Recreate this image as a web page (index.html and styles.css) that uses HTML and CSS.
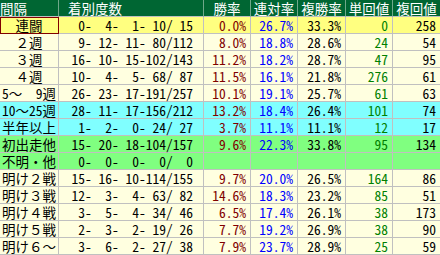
FILE: index.html
```html
<!DOCTYPE html>
<html lang="ja">
<head>
<meta charset="utf-8">
<link rel="stylesheet" href="styles.css">
</head>
<body>
<table class="stats">
  <colgroup>
    <col class="c-label"><col class="c-count"><col class="c-w"><col class="c-w"><col class="c-w2"><col class="c-w"><col class="c-w">
  </colgroup>
  <thead>
    <tr>
      <th class="h-label">間隔</th>
      <th class="h-count">着別度数</th>
      <th>勝率</th>
      <th>連対率</th>
      <th>複勝率</th>
      <th>単回値</th>
      <th>複回値</th>
    </tr>
  </thead>
  <tbody>
    <tr class="row-hl">
      <td class="label label-hl">連闘</td><td class="count">  0-  4-  1- 10/ 15</td><td class="win">0.0%</td><td class="ren">26.7%</td><td class="fuku">33.3%</td><td class="tan">0</td><td class="fk">258</td>
    </tr>
    <tr>
      <td class="label">２週</td><td class="count">  9- 12- 11- 80/112</td><td class="win">8.0%</td><td class="ren">18.8%</td><td class="fuku">28.6%</td><td class="tan">24</td><td class="fk">54</td>
    </tr>
    <tr>
      <td class="label">３週</td><td class="count"> 16- 10- 15-102/143</td><td class="win">11.2%</td><td class="ren">18.2%</td><td class="fuku">28.7%</td><td class="tan">47</td><td class="fk">95</td>
    </tr>
    <tr>
      <td class="label">４週</td><td class="count"> 10-  4-  5- 68/ 87</td><td class="win">11.5%</td><td class="ren">16.1%</td><td class="fuku">21.8%</td><td class="tan">276</td><td class="fk">61</td>
    </tr>
    <tr>
      <td class="label"><span class="hw">5</span>～　<span class="hw">9</span>週</td><td class="count"> 26- 23- 17-191/257</td><td class="win">10.1%</td><td class="ren">19.1%</td><td class="fuku">25.7%</td><td class="tan">61</td><td class="fk">63</td>
    </tr>
    <tr class="row-cyan">
      <td class="label"><span class="hw">10</span>～<span class="hw">25</span>週</td><td class="count"> 28- 11- 17-156/212</td><td class="win">13.2%</td><td class="ren">18.4%</td><td class="fuku">26.4%</td><td class="tan">101</td><td class="fk">74</td>
    </tr>
    <tr class="row-cyan">
      <td class="label">半年以上</td><td class="count">  1-  2-  0- 24/ 27</td><td class="win">3.7%</td><td class="ren">11.1%</td><td class="fuku">11.1%</td><td class="tan">12</td><td class="fk">17</td>
    </tr>
    <tr class="row-green">
      <td class="label">初出走他</td><td class="count"> 15- 20- 18-104/157</td><td class="win">9.6%</td><td class="ren">22.3%</td><td class="fuku">33.8%</td><td class="tan">95</td><td class="fk">134</td>
    </tr>
    <tr class="row-green">
      <td class="label">不明・他</td><td class="count">  0-  0-  0-  0/  0</td><td class="win"></td><td class="ren"></td><td class="fuku"></td><td class="tan"></td><td class="fk"></td>
    </tr>
    <tr>
      <td class="label">明け２戦</td><td class="count"> 15- 16- 10-114/155</td><td class="win">9.7%</td><td class="ren">20.0%</td><td class="fuku">26.5%</td><td class="tan">164</td><td class="fk">86</td>
    </tr>
    <tr>
      <td class="label">明け３戦</td><td class="count"> 12-  3-  4- 63/ 82</td><td class="win">14.6%</td><td class="ren">18.3%</td><td class="fuku">23.2%</td><td class="tan">85</td><td class="fk">51</td>
    </tr>
    <tr>
      <td class="label">明け４戦</td><td class="count">  3-  5-  4- 34/ 46</td><td class="win">6.5%</td><td class="ren">17.4%</td><td class="fuku">26.1%</td><td class="tan">38</td><td class="fk">173</td>
    </tr>
    <tr>
      <td class="label">明け５戦</td><td class="count">  2-  3-  2- 19/ 26</td><td class="win">7.7%</td><td class="ren">19.2%</td><td class="fuku">26.9%</td><td class="tan">38</td><td class="fk">90</td>
    </tr>
    <tr>
      <td class="label">明け６～</td><td class="count">  3-  6-  2- 27/ 38</td><td class="win">7.9%</td><td class="ren">23.7%</td><td class="fuku">28.9%</td><td class="tan">25</td><td class="fk">59</td>
    </tr>
  </tbody>
</table>
</body>
</html>
```

FILE: styles.css
```css
html, body {
  margin: 0;
  padding: 0;
  background: #ffffff;
}

.stats {
  border-collapse: separate;
  border-spacing: 0;
  table-layout: fixed;
  width: 440px;
  font-family: "Noto Sans CJK JP", "DejaVu Sans", sans-serif;
  font-size: 13.5px;
  color: #000000;
}

.c-label { width: 59px; }
.c-count { width: 145px; }
.c-w { width: 47px; }
.c-w2 { width: 48px; }

.stats th,
.stats td {
  height: 16px;
  padding: 0;
  line-height: 16px;
  border-right: 1px solid #c0c0c0;
  border-bottom: 1px solid #c0c0c0;
  white-space: pre;
  box-sizing: content-box;
}

.stats th:last-child,
.stats td:last-child {
  border-right: none;
}

.stats th {
  background: #006633;
  color: #ffffff;
  font-weight: normal;
  text-align: center;
  border-right-color: #6fa88a;
  border-bottom-color: #c0c0c0;
}

.stats th.h-label {
  text-align: left;
}

.stats th.h-count {
  text-align: left;
  padding-left: 9px;
}

.stats td {
  background: #ffffe0;
  text-align: right;
  padding-right: 4px;
  font-feature-settings: "hwid" 1;
}

.stats td.label {
  text-align: center;
  padding-right: 0;
  font-feature-settings: normal;
}

.hw {
  font-feature-settings: "hwid" 1;
}

.stats td.count {
  padding-right: 10px;
}

.row-hl td { background: #ffff80; }
.row-cyan td { background: #80ffff; }
.row-green td { background: #80ff80; }

.stats td.label-hl {
  outline: 1px solid #800000;
  outline-offset: -1px;
}

.win { color: #800000; }
.ren { color: #0000ff; }
.fuku { color: #000000; }
.tan { color: #008000; }
.fk { color: #000000; }
```
